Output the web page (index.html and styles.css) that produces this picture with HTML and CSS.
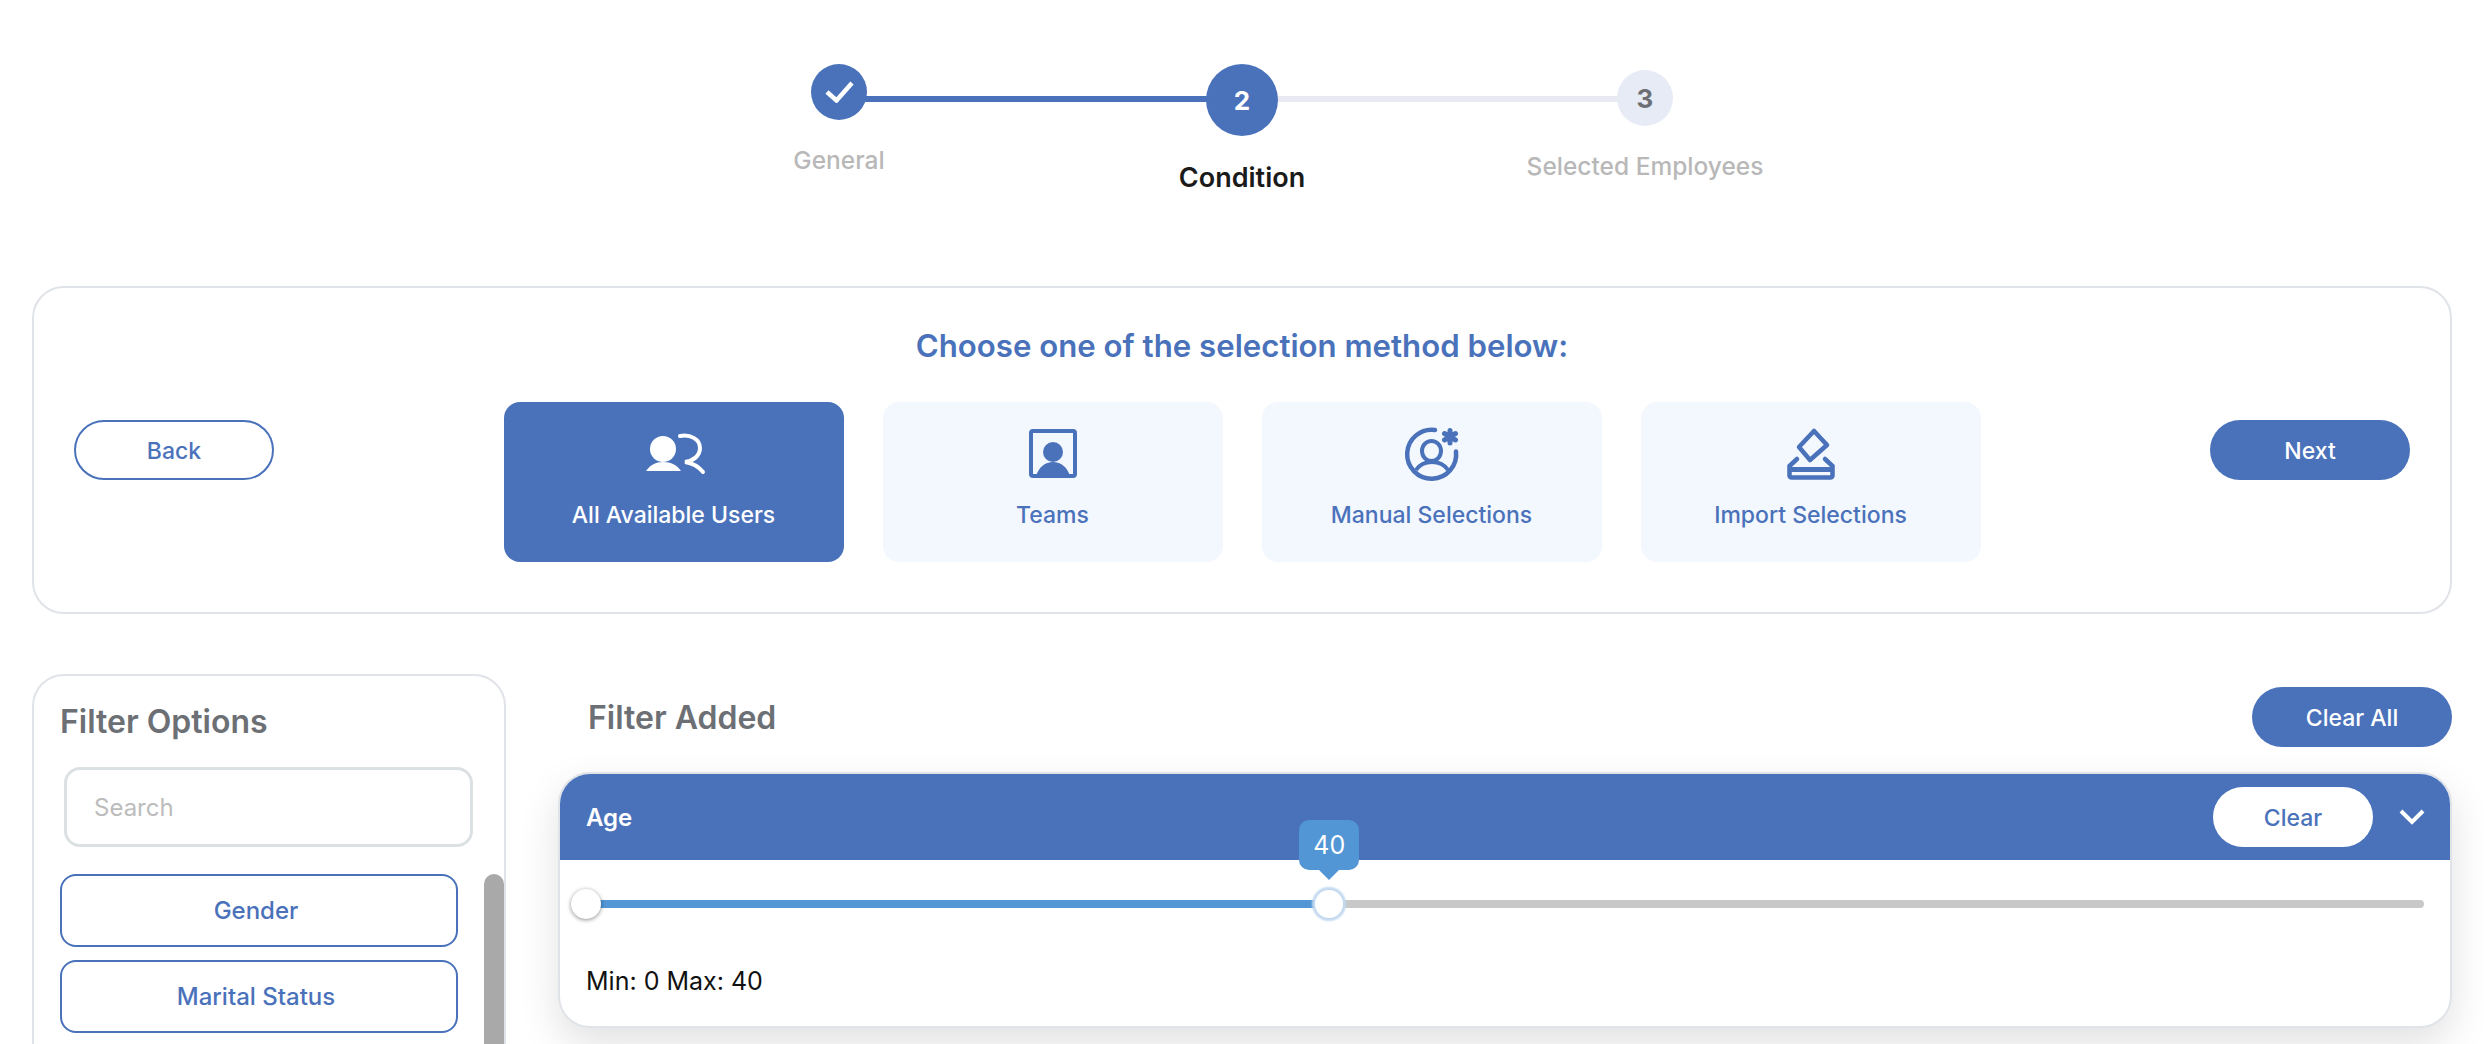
FILE: index.html
```html
<!DOCTYPE html>
<html lang="en">
<head>
<meta charset="utf-8">
<title>Condition</title>
<link rel="stylesheet" href="styles.css">
</head>
<body>
<div class="stepper">
  <div class="step step-done">
    <div class="step-dot"><svg width="29" height="22" viewBox="0 0 29 22"><path d="M2 11l9.500 8.500L27 2" fill="none" stroke="#fff" stroke-width="4.500"/></svg></div>
    <div class="step-label">General</div>
  </div>
  <div class="step-line line-on"></div>
  <div class="step step-active">
    <div class="step-dot">2</div>
    <div class="step-label">Condition</div>
  </div>
  <div class="step-line line-off"></div>
  <div class="step step-todo">
    <div class="step-dot">3</div>
    <div class="step-label">Selected Employees</div>
  </div>
</div>

<section class="method-card">
  <h2 class="method-title">Choose one of the selection method below:</h2>
  <div class="method-row">
    <button class="pill pill-outline">Back</button>
    <div class="tiles">
      <div class="tile tile-on">
        <svg class="tile-icon" width="90" height="70" viewBox="-1 0 90 70"><circle cx="33" cy="34" r="13" fill="#fff"/><path d="M16 56C20 50 26 47 33 47C41 47 47 50 51 56Z" fill="#fff"/><path d="M50 21C60 19 70 24 70 33C70 41 63 46 55 47C62 48 68 51 73 57" fill="none" stroke="#fff" stroke-width="4" stroke-linecap="round"/></svg>
        <span>All Available Users</span>
      </div>
      <div class="tile">
        <svg class="tile-icon" width="90" height="70" viewBox="-7 0 90 70"><rect x="16" y="16" width="44" height="45" rx="2" fill="none" stroke="#4a72bb" stroke-width="4"/><circle cx="38" cy="37" r="10" fill="#4a72bb"/><path d="M21 61C24 52 30 47 38 47C46 47 52 52 55 61Z" fill="#4a72bb"/></svg>
        <span>Teams</span>
      </div>
      <div class="tile">
        <svg class="tile-icon" width="90" height="70" viewBox="2 0 90 70"><path d="M50 15A24.500 24.500 0 1 0 71 36.500" fill="none" stroke="#4a72bb" stroke-width="4.500" stroke-linecap="round"/><ellipse cx="46.500" cy="36" rx="9.500" ry="10" fill="none" stroke="#4a72bb" stroke-width="4"/><path d="M31 55C35 49 40 47 47 47C53 47 59 49 63 55" fill="none" stroke="#4a72bb" stroke-width="4"/><path d="M65 15.500V28M59.500 18.500L70.500 25M70.500 18.500L59.500 25" fill="none" stroke="#4a72bb" stroke-width="5" stroke-linecap="round"/></svg>
        <span>Manual Selections</span>
      </div>
      <div class="tile">
        <svg class="tile-icon" width="90" height="70" viewBox="1 0 90 70"><path d="M49 16L62 30L45 45L34 32Z" fill="none" stroke="#4a72bb" stroke-width="4.500" stroke-linejoin="round"/><path d="M32 44L24.500 51V60.500a2 2 0 0 0 2 2H65.500a2 2 0 0 0 2-2V51L60 44" fill="none" stroke="#4a72bb" stroke-width="4.500" stroke-linecap="round"/><path d="M24 54.500H68" fill="none" stroke="#4a72bb" stroke-width="5"/></svg>
        <span>Import Selections</span>
      </div>
    </div>
    <button class="pill pill-solid">Next</button>
  </div>
</section>

<div class="workspace">
  <aside class="filters">
    <h3 class="filters-title">Filter Options</h3>
    <input class="search" type="text" placeholder="Search">
    <div class="filter-list">
      <div class="filter-btns">
        <button class="filter-btn">Gender</button>
        <button class="filter-btn">Marital Status</button>
      </div>
      <div class="scrollbar"></div>
    </div>
  </aside>
  <main class="added">
    <div class="added-head">
      <h3 class="added-title">Filter Added</h3>
      <button class="pill pill-solid">Clear All</button>
    </div>
    <div class="filter-card">
      <div class="filter-card-head">
        <span class="filter-name">Age</span>
        <button class="pill pill-white">Clear</button>
        <svg class="chevron" width="26" height="16" viewBox="0 0 26 16"><path d="M2 2l11 11L24 2" fill="none" stroke="#fff" stroke-width="4"/></svg>
      </div>
      <div class="filter-card-body">
        <div class="slider">
          <div class="slider-fill" style="width:40.44%"></div>
          <div class="thumb thumb-min"></div>
          <div class="thumb thumb-max" style="left:40.44%"><div class="bubble">40</div></div>
        </div>
        <div class="range-text">Min: 0 Max: 40</div>
      </div>
    </div>
  </main>
</div>
</body>
</html>
```
FILE: styles.css
```css
* { box-sizing: border-box; }
html, body { height: 100%; }
body {
  margin: 0;
  padding: 64px 32px 0;
  background: #fff;
  font-family: "Inter", "Liberation Sans", sans-serif;
  overflow: hidden;
}
button { font-family: inherit; cursor: pointer; }
h2, h3 { margin: 0; }

.stepper { display: flex; justify-content: center; align-items: flex-start; height: 222px; }
.step { width: 0; display: flex; flex-direction: column; align-items: center; flex: none; position: relative; z-index: 1; }
.step-dot { flex: none; display: flex; align-items: center; justify-content: center; border-radius: 50%; font-weight: 700; }
.step-label { white-space: nowrap; font-size: 24.500px; line-height: 30px; color: #b8b8b8; font-weight: 500; }
.step-done .step-dot { width: 56px; height: 56px; background: #4a72bb; }
.step-done .step-label { margin-top: 25px; }
.step-active .step-dot { width: 72px; height: 72px; background: #4a72bb; color: #fff; font-size: 26px; }
.step-active .step-label { margin-top: 27px; color: #1a1a1a; font-weight: 600; font-size: 27px; }
.step-todo { padding-top: 6px; }
.step-todo .step-dot { width: 56px; height: 56px; background: #e6ebf6; color: #6c7075; font-size: 26px; }
.step-todo .step-label { margin-top: 25px; }
.step-line { width: 403px; height: 6px; margin-top: 32px; flex: none; }
.line-on { background: #4a72bb; }
.line-off { background: #e9e9f3; }

.method-card { height: 328px; border: 2px solid #e0e3e8; border-radius: 32px; padding: 38px 40px 0; }
.method-title { text-align: center; font-size: 31.200px; line-height: 40px; font-weight: 600; color: #4a72bb; }
.method-row { display: flex; align-items: flex-start; justify-content: space-between; margin-top: 36px; }
.pill { width: 200px; height: 60px; padding: 1px 0 0; border-radius: 30px; font-size: 23px; font-weight: 500; flex: none; }
.method-row .pill { margin-top: 18px; }
.pill-outline { background: #fff; border: 2px solid #4a72bb; color: #4a72bb; }
.pill-solid { background: #4a72bb; border: 0; color: #fff; }
.pill-white { width: 160px; background: #fff; border: 0; color: #4a72bb; }
.tiles { display: flex; gap: 39px; }
.tile { width: 340px; height: 160px; border-radius: 16px; background: #f3f7fe; color: #4a72bb; display: flex; flex-direction: column; align-items: center; font-size: 23px; font-weight: 500; line-height: 30px; padding-top: 13px; }
.tile span { margin-top: 15px; }
.tile-on { background: #4a72bb; color: #fff; }

.workspace { display: flex; margin-top: 60px; gap: 52px; height: 400px; align-items: flex-start; }
.filters { width: 474px; height: 400px; flex: none; border: 2px solid #e0e3e8; border-radius: 32px; padding: 26px 0 0 26px; }
.filters-title { font-size: 32px; line-height: 40px; color: #6c7075; font-weight: 600; }
.search { display: block; width: 409px; height: 80px; margin: 25px 0 0 4px; border: 3px solid #dbe1e3; border-radius: 16px; padding: 1px 27px 0; font: inherit; font-size: 24px; outline: 0; }
.search::placeholder { color: #bcbcbc; }
.filter-list { display: flex; justify-content: space-between; margin-top: 27px; }
.filter-btns { display: flex; flex-direction: column; gap: 13px; }
.filter-btn { width: 398px; height: 73px; background: #fff; border: 2px solid #4a72bb; border-radius: 16px; color: #4a72bb; font-size: 24px; font-weight: 500; padding: 0 6px 0 0; }
.scrollbar { width: 20px; height: 200px; background: #a9a9a9; border-radius: 10px 10px 0 0; }

.added { flex: 1; min-width: 0; }
.added-head { display: flex; align-items: center; justify-content: space-between; padding: 13px 0 0 30px; }
.added-title { font-size: 32px; line-height: 40px; color: #6c7075; font-weight: 600; margin-top: 2px; }
.filter-card { margin-top: 25px; height: 256px; background: #fff; border: 2px solid #e0e3e8; border-radius: 32px; box-shadow: 0 16px 40px rgba(0,0,0,.12); }
.filter-card-head { height: 86px; background: #4a72bb; border-radius: 30px 30px 0 0; display: flex; align-items: center; padding: 0 25px 0 26px; color: #fff; }
.filter-name { flex: 1; font-size: 24px; font-weight: 600; }
.chevron { margin-left: 26px; }
.filter-card-body { padding: 40px 26px 0 26px; }
.slider { position: relative; height: 8px; background: #c8c8c8; border-radius: 4px; }
.slider-fill { height: 100%; background: #5296d5; border-radius: 4px 0 0 4px; }
.thumb { position: absolute; top: 4px; width: 30px; height: 30px; margin: -15px 0 0 -15px; border-radius: 50%; background: #fff; box-shadow: 0 1px 4px rgba(0,0,0,.45); }
.thumb-min { left: 0; }
.thumb-max { width: 28px; height: 28px; margin: -14px 0 0 -14px; box-shadow: 0 0 2px 3px #c2d9f0; }
.bubble { position: absolute; left: 50%; bottom: 48px; transform: translateX(-50%); width: 60px; height: 50px; background: #5296d5; border-radius: 10px; color: #fff; font-size: 25px; line-height: 50px; text-align: center; }
.bubble::after { content: ""; position: absolute; left: 50%; top: 100%; margin-left: -10px; border: 10px solid transparent; border-top-color: #5296d5; border-bottom: 0; }
.range-text { margin-top: 58px; font-size: 25px; line-height: 30px; color: #111; }
```
